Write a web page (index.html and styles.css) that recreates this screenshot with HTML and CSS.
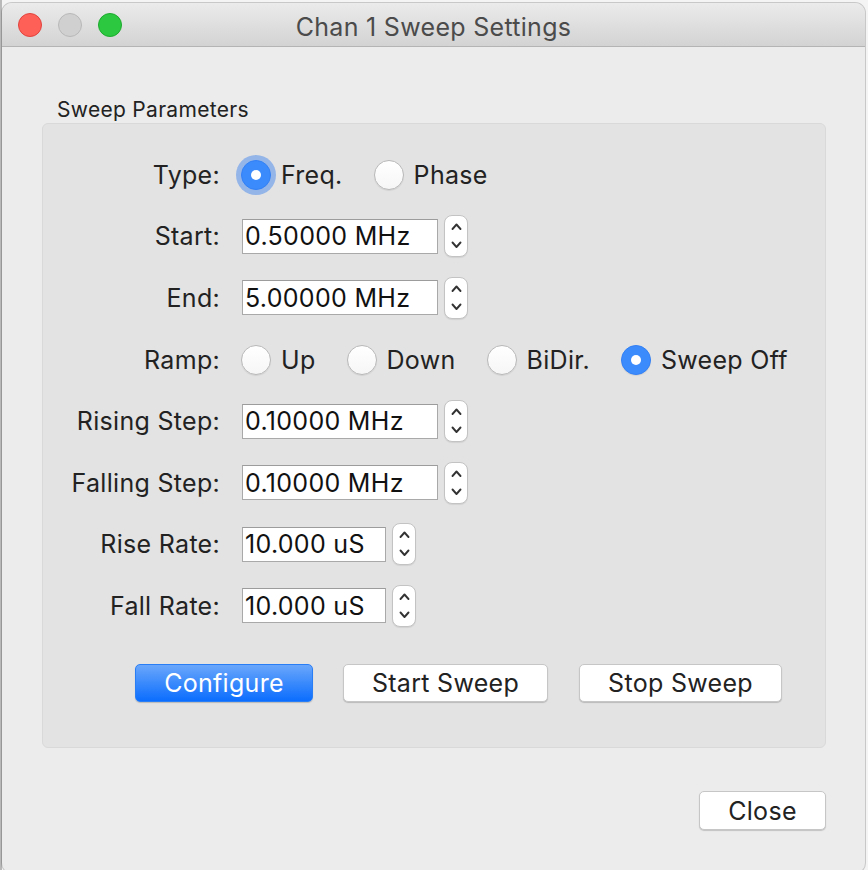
FILE: index.html
```html
<!DOCTYPE html>
<html>
<head>
<meta charset="utf-8">
<title>Chan 1 Sweep Settings</title>
<link rel="stylesheet" href="styles.css">
</head>
<body>
<div class="window">
  <div class="titlebar">
    <div class="lights">
      <span class="light red"></span>
      <span class="light gray"></span>
      <span class="light green"></span>
    </div>
    <div class="title">Chan 1 Sweep Settings</div>
    <div></div>
  </div>
  <div class="content">
    <div class="group-title">Sweep Parameters</div>
    <div class="group">
      <div class="form">
        <div class="lbl">Type:</div>
        <div class="field options">
          <span class="opt"><span class="radio on focus"></span>Freq.</span>
          <span class="opt"><span class="radio"></span>Phase</span>
        </div>

        <div class="lbl">Start:</div>
        <div class="field spin">
          <span class="input wide">0.50000 MHz</span>
          <span class="stepper"><svg viewBox="0 0 24 42" width="24" height="42"><path d="M8.5 14 L12.5 9.5 L16.5 14 M8.5 27.5 L12.5 32 L16.5 27.5" fill="none" stroke="#333" stroke-width="1.9" stroke-linecap="round" stroke-linejoin="round"/></svg></span>
        </div>

        <div class="lbl">End:</div>
        <div class="field spin">
          <span class="input wide">5.00000 MHz</span>
          <span class="stepper"><svg viewBox="0 0 24 42" width="24" height="42"><path d="M8.5 14 L12.5 9.5 L16.5 14 M8.5 27.5 L12.5 32 L16.5 27.5" fill="none" stroke="#333" stroke-width="1.9" stroke-linecap="round" stroke-linejoin="round"/></svg></span>
        </div>

        <div class="lbl">Ramp:</div>
        <div class="field options">
          <span class="opt"><span class="radio"></span>Up</span>
          <span class="opt"><span class="radio"></span>Down</span>
          <span class="opt"><span class="radio"></span>BiDir.</span>
          <span class="opt"><span class="radio on"></span>Sweep Off</span>
        </div>

        <div class="lbl">Rising Step:</div>
        <div class="field spin">
          <span class="input wide">0.10000 MHz</span>
          <span class="stepper"><svg viewBox="0 0 24 42" width="24" height="42"><path d="M8.5 14 L12.5 9.5 L16.5 14 M8.5 27.5 L12.5 32 L16.5 27.5" fill="none" stroke="#333" stroke-width="1.9" stroke-linecap="round" stroke-linejoin="round"/></svg></span>
        </div>

        <div class="lbl">Falling Step:</div>
        <div class="field spin">
          <span class="input wide">0.10000 MHz</span>
          <span class="stepper"><svg viewBox="0 0 24 42" width="24" height="42"><path d="M8.5 14 L12.5 9.5 L16.5 14 M8.5 27.5 L12.5 32 L16.5 27.5" fill="none" stroke="#333" stroke-width="1.9" stroke-linecap="round" stroke-linejoin="round"/></svg></span>
        </div>

        <div class="lbl">Rise Rate:</div>
        <div class="field spin">
          <span class="input narrow">10.000 uS</span>
          <span class="stepper"><svg viewBox="0 0 24 42" width="24" height="42"><path d="M8.5 14 L12.5 9.5 L16.5 14 M8.5 27.5 L12.5 32 L16.5 27.5" fill="none" stroke="#333" stroke-width="1.9" stroke-linecap="round" stroke-linejoin="round"/></svg></span>
        </div>

        <div class="lbl">Fall Rate:</div>
        <div class="field spin">
          <span class="input narrow">10.000 uS</span>
          <span class="stepper"><svg viewBox="0 0 24 42" width="24" height="42"><path d="M8.5 14 L12.5 9.5 L16.5 14 M8.5 27.5 L12.5 32 L16.5 27.5" fill="none" stroke="#333" stroke-width="1.9" stroke-linecap="round" stroke-linejoin="round"/></svg></span>
        </div>
      </div>
      <div class="actions">
        <button class="btn primary configure">Configure</button>
        <button class="btn start">Start Sweep</button>
        <button class="btn stop">Stop Sweep</button>
      </div>
    </div>
    <div class="footer">
      <button class="btn close">Close</button>
    </div>
  </div>
</div>
</body>
</html>
```

FILE: styles.css
```css
* { box-sizing: border-box; }

html, body {
  margin: 0;
  padding: 0;
  width: 868px;
  height: 870px;
  overflow: hidden;
}

body {
  background: linear-gradient(to right, #b9b9b9 0, #b9b9b9 2px, #f4f4f4 2px);
  font-family: "Inter", "Liberation Sans", sans-serif;
  color: #222;
  letter-spacing: 0.3px;
}

.window {
  margin: 3px 0 0 2px;
  width: 863px;
  height: 870px;
  background: #ececec;
  border-radius: 10px;
  box-shadow: 0 0 0 1px rgba(0, 0, 0, 0.18);
  overflow: hidden;
  display: flex;
  flex-direction: column;
}

.titlebar {
  height: 44px;
  flex: none;
  display: grid;
  grid-template-columns: 1fr auto 1fr;
  align-items: center;
  background: linear-gradient(#ebebeb, #d3d3d3);
  border-bottom: 1px solid #b4b4b4;
}

.lights {
  display: flex;
  gap: 16px;
  padding-left: 16px;
}

.light {
  width: 24px;
  height: 24px;
  border-radius: 50%;
  display: block;
}
.light.red { background: #fe5f57; border: 1px solid #e0443e; }
.light.gray { background: #d0d0d0; border: 1px solid #b8b8b8; }
.light.green { background: #2bc840; border: 1px solid #1eaa2e; }

.title {
  font-size: 25px;
  color: #4b4b4b;
  padding-top: 4px;
}

.content {
  flex: 1;
  display: flex;
  flex-direction: column;
  padding: 51px 0 0 40px;
}

.group-title {
  font-size: 21px;
  line-height: 24px;
  padding-left: 15px;
  color: #222;
}

.group {
  margin-top: 1px;
  width: 784px;
  height: 625px;
  background: #e3e3e3;
  border: 1px solid #d9d9d9;
  border-radius: 6px;
  padding-top: 20px;
}

.form {
  display: grid;
  grid-template-columns: 177px 1fr;
  grid-auto-rows: 61.6px;
  column-gap: 21px;
  align-items: center;
}

.lbl {
  text-align: right;
  font-size: 25px;
  color: #222;
}

.field {
  display: flex;
  align-items: center;
  font-size: 25px;
  color: #222;
}

.options { gap: 31px; }

.opt {
  display: flex;
  align-items: center;
  gap: 10px;
}

.radio {
  width: 30px;
  height: 30px;
  border-radius: 50%;
  background: linear-gradient(#ffffff, #f6f6f6);
  border: 1px solid #b9b9b9;
  box-shadow: 0 1px 1px rgba(0, 0, 0, 0.08);
  display: flex;
  align-items: center;
  justify-content: center;
  flex: none;
}

.radio.on {
  background: #3c8bfc;
  border-color: #3280f5;
}
.radio.on::after {
  content: "";
  width: 10px;
  height: 10px;
  border-radius: 50%;
  background: #fff;
}
.radio.focus {
  box-shadow: 0 0 0 5px rgba(95, 150, 235, 0.6);
}

.spin { gap: 6px; }

.input {
  margin-left: 1px;
  height: 35px;
  background: #fff;
  border: 1px solid #a9a9a9;
  border-top-color: #9c9c9c;
  padding: 0 2px;
  display: flex;
  align-items: center;
  font-size: 25px;
  color: #111;
}
.input.wide { width: 196px; }
.input.narrow { width: 144px; }

.stepper {
  width: 24px;
  height: 42px;
  background: #fff;
  border: 1px solid #c3c3c3;
  border-radius: 8px;
  box-shadow: 0 1px 1px rgba(0, 0, 0, 0.08);
  display: block;
  overflow: hidden;
}
.stepper svg { display: block; margin: -1px 0 0 -1px; }

.actions {
  display: flex;
  gap: 30px;
  padding-left: 92px;
  margin-top: 27px;
}

.btn {
  font-family: "Inter", "Liberation Sans", sans-serif;
  font-size: 25px;
  letter-spacing: 0.3px;
  height: 38px;
  border-radius: 5px;
  background: #fff;
  border: 1px solid #c6c6c6;
  box-shadow: 0 1px 1px rgba(0, 0, 0, 0.18);
  color: #222;
  padding: 0;
  display: flex;
  align-items: center;
  justify-content: center;
}

.btn.primary {
  background: linear-gradient(#6aa7fb, #0b6dfe);
  border-color: #2a7ef5;
  color: #fff;
}

.configure { width: 178px; }
.start { width: 205px; }
.stop { width: 203px; margin-left: 1px; }

.footer {
  display: flex;
  justify-content: flex-end;
  padding-right: 39px;
  margin-top: 43px;
}

.close { width: 127px; height: 39px; }
```
